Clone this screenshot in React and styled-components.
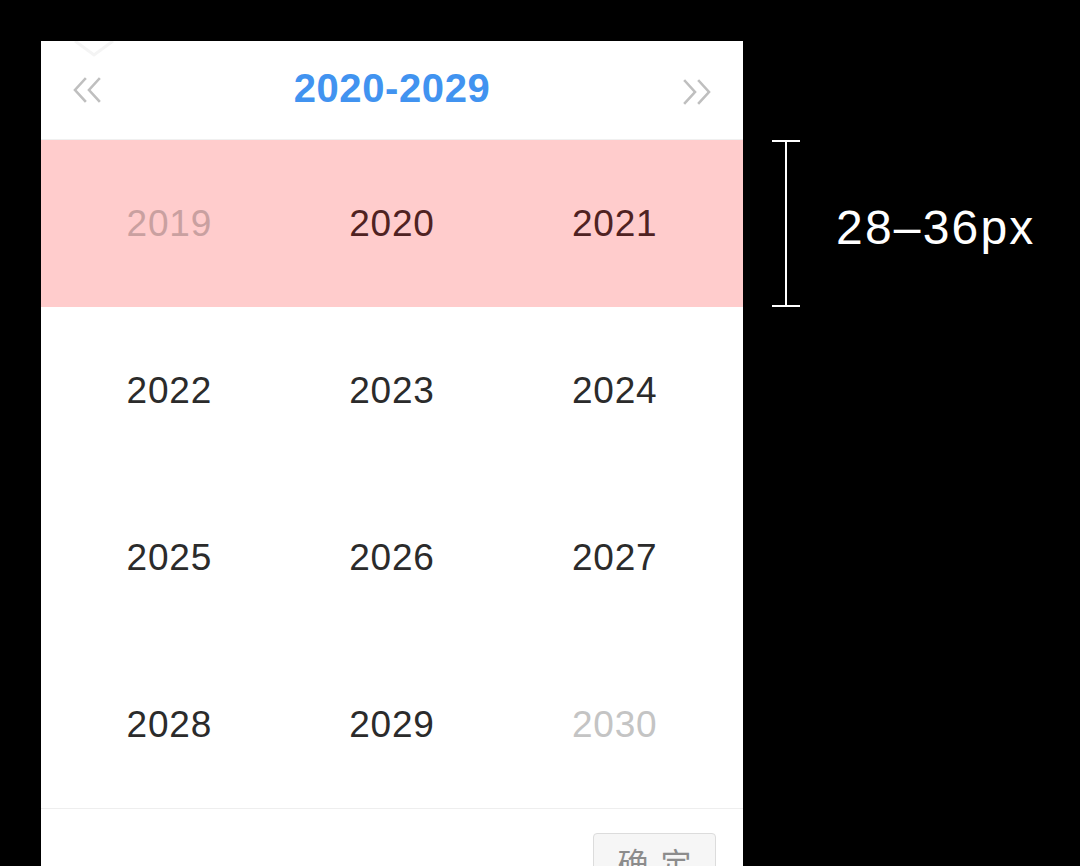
import React from "react";
import styled, { createGlobalStyle } from "styled-components";

const Global = createGlobalStyle`
  html, body { margin: 0; padding: 0; background: #000; }
  body { font-family: "Liberation Sans", Arial, sans-serif; }
`;

const Page = styled.div`
  display: flex;
  align-items: flex-start;
  padding: 41px 0 0 41px;
  height: 825px;
  overflow: hidden;
`;

const Panel = styled.div`
  position: relative;
  width: 702px;
  background: #fff;
  display: flex;
  flex-direction: column;
`;

const Caret = styled.svg`
  position: absolute;
  left: 30px;
  top: 0;
`;

const Header = styled.div`
  height: 98px;
  border-bottom: 1px solid #f0f0f0;
  display: flex;
  align-items: center;
  justify-content: space-between;
  padding: 0 30px;
`;

const NavBtn = styled.span`
  display: flex;
  width: 34px;
  justify-content: center;
  margin-top: ${(p) => p.$dy}px;
`;

const Title = styled.div`
  font-family: "Liberation Sans", Arial, sans-serif;
  font-size: 40px;
  font-weight: 700;
  color: #4193f0;
  letter-spacing: 0.6px;
  margin-top: -4px;
`;

const Row = styled.div`
  display: grid;
  grid-template-columns: repeat(3, 1fr);
  padding: 0 17px;
  height: 167px;
  background: ${(p) => (p.$hl ? "#ffcccc" : "#fff")};
`;

const Cell = styled.div`
  display: flex;
  align-items: center;
  justify-content: center;
  font-family: "Liberation Sans", Arial, sans-serif;
  font-size: 37px;
  letter-spacing: 0.8px;
  color: ${(p) => p.$color};
`;

const Footer = styled.div`
  border-top: 1px solid #eeeeee;
  display: flex;
  justify-content: flex-end;
  padding: 24px 27px 20px 0;
`;

const Button = styled.div`
  width: 123px;
  height: 50px;
  border: 1px solid #dcdcdc;
  border-radius: 4px;
  background: #f6f6f6;
  color: #8c8c8c;
  font-family: "Noto Sans CJK SC", sans-serif;
  font-size: 31px;
  display: flex;
  justify-content: center;
  align-items: center;
  letter-spacing: 12px;
  padding-left: 12px;
  padding-top: 6px;
  box-sizing: border-box;
`;

const Annotation = styled.div`
  display: flex;
  align-items: center;
  margin-top: 99px;
  height: 168px;
  margin-left: 27px;
`;

const Label = styled.div`
  color: #fff;
  font-family: "Liberation Sans", Arial, sans-serif;
  font-size: 48px;
  margin-left: 34px;
  margin-top: 6px;
  letter-spacing: 2.2px;
`;

const DoubleChevron = ({ dir }) => (
  <svg width="32" height="26" viewBox="0 0 32 26">
    <g
      fill="none"
      stroke="#bfbfbf"
      strokeWidth="2.6"
      strokeLinecap="square"
      transform={dir === "right" ? "translate(32 0) scale(-1 1)" : undefined}
    >
      <polyline points="13,2 3,13 13,24" />
      <polyline points="27,2 17,13 27,24" />
    </g>
  </svg>
);

const rows = [
  [
    ["2019", "#c9a0a0"],
    ["2020", "#4f2222"],
    ["2021", "#4f2222"],
  ],
  [
    ["2022", "#2b2b2b"],
    ["2023", "#2b2b2b"],
    ["2024", "#2b2b2b"],
  ],
  [
    ["2025", "#2b2b2b"],
    ["2026", "#2b2b2b"],
    ["2027", "#2b2b2b"],
  ],
  [
    ["2028", "#2b2b2b"],
    ["2029", "#2b2b2b"],
    ["2030", "#c4c4c4"],
  ],
];

export default function App() {
  return (
    <>
      <Global />
      <Page>
        <Panel>
          <Caret width="46" height="18" viewBox="0 0 46 18">
            <polyline
              points="4,0 23,14 42,0"
              fill="none"
              stroke="#f4f4f4"
              strokeWidth="3"
            />
          </Caret>
          <Header>
            <NavBtn $dy={0}>
              <DoubleChevron dir="left" />
            </NavBtn>
            <Title>2020-2029</Title>
            <NavBtn $dy={4}>
              <DoubleChevron dir="right" />
            </NavBtn>
          </Header>
          {rows.map((r, i) => (
            <Row key={i} $hl={i === 0}>
              {r.map(([y, c]) => (
                <Cell key={y} $color={c}>
                  {y}
                </Cell>
              ))}
            </Row>
          ))}
          <Footer>
            <Button>确定</Button>
          </Footer>
        </Panel>
        <Annotation>
          <svg width="32" height="168" viewBox="0 0 32 168">
            <g stroke="#fff" strokeWidth="2" fill="none">
              <line x1="2" y1="1" x2="30" y2="1" />
              <line x1="16" y1="1" x2="16" y2="166" />
              <line x1="2" y1="166" x2="30" y2="166" />
            </g>
          </svg>
          <Label>28–36px</Label>
        </Annotation>
      </Page>
    </>
  );
}
